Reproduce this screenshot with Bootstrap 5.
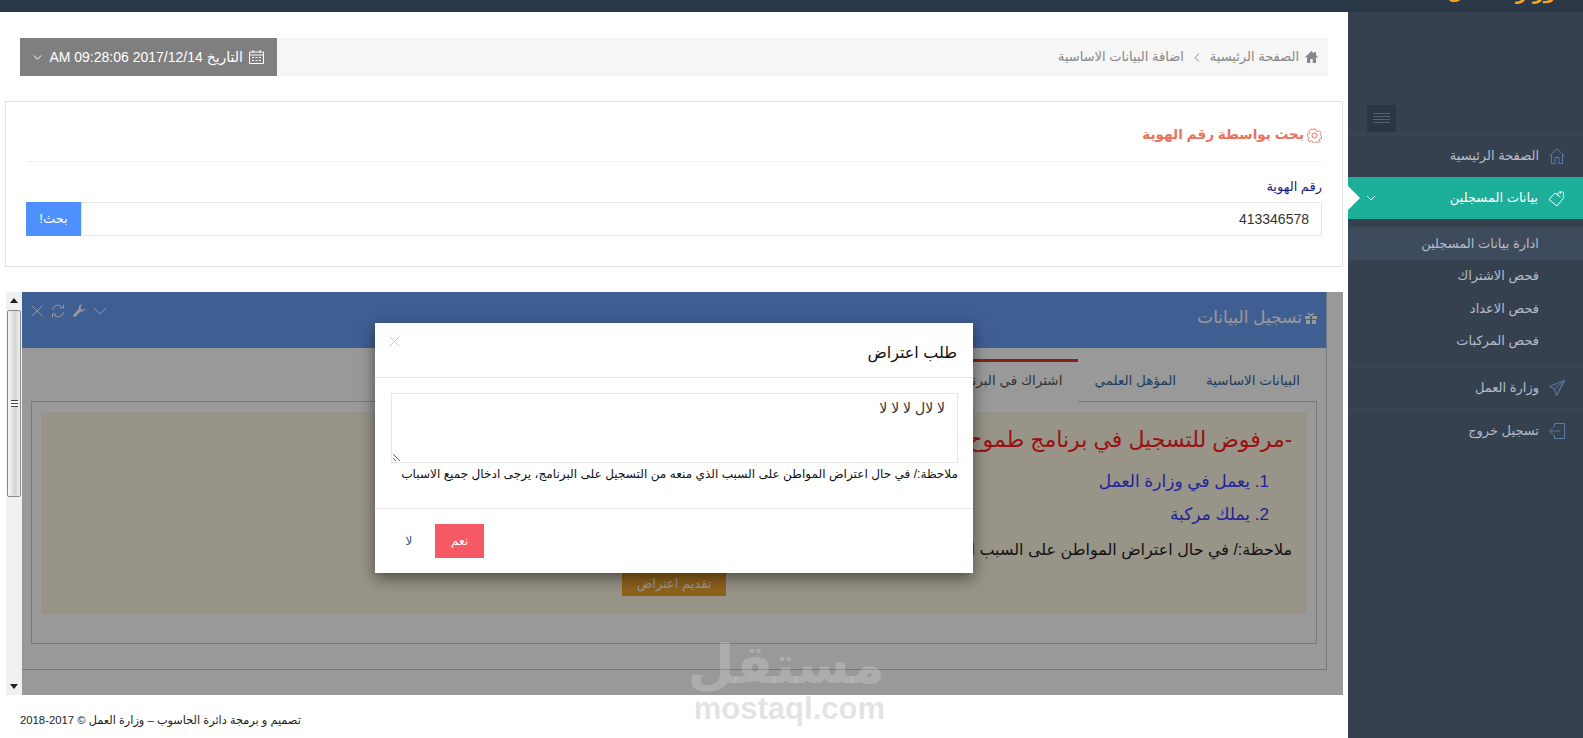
<!DOCTYPE html>
<html lang="ar" dir="rtl">
<head>
  <meta charset="UTF-8">
  <meta name="viewport" content="width=device-width, initial-scale=1.0">
  <title>اضافة البيانات الاساسية</title>
  <link href="https://cdn.jsdelivr.net/npm/bootstrap@5.3.0/dist/css/bootstrap.min.css" rel="stylesheet">
  <style>
    html, body { height: 738px; overflow: hidden; }
    body { font-family: "Liberation Sans", "DejaVu Sans", sans-serif; font-size: 13px; color: #333; background: #fff; position: relative; }
    .ico { display: block; flex: none; fill: none; stroke: currentColor; stroke-width: 1; }
    .ico-fill { fill: currentColor; stroke: none; }

    .top-strip { height: 12px; background: #2b3847; overflow: hidden; display: flex; align-items: flex-start; padding-right: 28px; }
    .top-logo { color: #f5a623; font-size: 18.5px; font-weight: 700; line-height: 20px; margin-top: -17px; white-space: nowrap; }
    .page-wrap { height: 726px; }

    .side-menu { width: 235px; flex: none; background: #364150; padding-top: 93px; color: #b4bcc8; }
    .side-toggle { width: 29px; height: 27px; margin-right: auto; margin-left: 19px; background: #2b3643; display: flex; align-items: center; justify-content: center; color: #55606e; margin-bottom: 2px; }
    .side-item { height: 43px; display: flex; align-items: center; padding: 0 18px 0 0; gap: 10px; border-top: 1px solid #3d4957; font-size: 13px; position: relative; }
    .side-item .ico { color: #5b7ba8; }
    .side-item-on { height: 42px; background: #1cb09a; color: #fff; border-top: 0; }
    .side-item-on .ico { color: #fff; }
    .side-item-on .side-arrow { margin-right: auto; margin-left: 18px; width: 10px; height: 10px; }
    .side-notch { position: absolute; left: 0; top: 9px; width: 0; height: 0; border-style: solid; border-width: 12px 0 12px 12px; border-color: transparent transparent transparent #fff; }
    .side-sub { list-style: none; margin: 8px 0 9px; padding: 0; }
    .side-sub li { height: 32.5px; display: flex; align-items: center; padding-right: 44px; font-size: 13px; }
    .side-sub li.sub-on { background: #3e4b5c; }

    .main-col { width: 1348px; flex: none; }
    .crumb-row { margin: 26px 20px 25px; height: 38px; background: #f6f6f6; display: flex; align-items: center; }
    .crumb-list { display: flex; align-items: center; gap: 6px; padding-right: 10px; color: #888; font-size: 13px; margin: 0; }
    .crumb-sep { margin: 0 4px; }
    .date-btn { margin-right: auto; width: 257px; height: 38px; background: #7f7f7f; color: #fff; display: flex; align-items: center; padding: 0 13px; gap: 6px; font-size: 14px; white-space: nowrap; }
    .date-btn .date-caret { margin-right: auto; }

    .search-card { margin: 0 5px 25px; height: 166px; border: 1px solid #e2e2e2; border-radius: 0; padding: 0 20px 0 21px; }
    .search-title { height: 60px; display: flex; align-items: center; gap: 3px; padding-top: 7px; border-bottom: 1px solid #eee; color: #e8735f; font-weight: 700; font-size: 13.6px; }
    .search-label { color: #1a1a80; font-size: 13px; margin: 16px 0 6px; line-height: 18px; display: block; }
    .search-group .form-control { height: 34px; border-radius: 0; border: 1px solid #e5e5e5; font-size: 14px; color: #333; padding: 0 12px; font-family: "Liberation Sans", sans-serif; }
    .search-group .btn { width: 55px; height: 34px; border-radius: 0; background: #4d90fe; color: #fff; font-size: 13px; border: 0; padding: 0; margin: 0; }

    .frame-box { margin: 0 5px 0 6px; height: 403px; display: flex; width: 1337px; }
    .frame-view { width: 1321px; flex: none; position: relative; overflow: hidden; }
    .frame-bar { width: 16px; flex: none; background: #f0f0f0; display: flex; flex-direction: column; align-items: center; font-size: 0; }
    .bar-up, .bar-down { width: 0; height: 0; border-style: solid; border-width: 0 4px 5px; border-color: transparent transparent #222; margin: 6px 0 7px; }
    .bar-down { border-width: 5px 4px 0; border-color: #222 transparent transparent; margin: auto 0 6px; }
    .bar-thumb { width: 14px; height: 187px; border: 1px solid #8a8a8a; border-radius: 2px; background: linear-gradient(90deg, #f8f8f8, #d4d4d4 60%, #efefef); display: flex; align-items: center; justify-content: center; }
    .bar-grip { width: 7px; height: 7px; border-top: 1px solid #444; border-bottom: 1px solid #444; background: linear-gradient(#fff 2px, #444 2px, #444 3px, #fff 3px); }

    .reg-panel { width: 1305px; height: 378px; margin-right: 16px; border: 0; border-right: 1px solid #bcd; border-bottom: 1px solid #b9c6da; background: #fff; border-radius: 0; }
    .reg-head { height: 56px; background: #699ef5; color: #fff; display: flex; padding: 16px 9px 0 8px; font-size: 17px; line-height: 20px; gap: 3px; }
    .reg-head .ico-gift { margin-top: 5px; }
    .reg-tools { margin-right: auto; display: flex; gap: 7px; flex-direction: row; height: 16px; margin-top: -4px; }
    .reg-tabs { padding-right: 10px; height: 54px; border: 0; padding-top: 11px; display: flex; margin-bottom: 0; }
    .reg-tabs .nav-link { border: 0; color: #39699a; font-size: 13.5px; padding: 0 16px 0 16px; height: 43px; line-height: 43px; border-radius: 0; margin: 0; background: transparent; }
    .reg-tabs .nav-item:first-child .nav-link { padding-left: 14px; }
    .reg-tabs .nav-link.active { color: #555; border-top: 3px solid #d4392d; border-left: 1px solid #ccc; background: #fff; line-height: 37px; height: 44px; position: relative; z-index: 1; margin-bottom: -1px; }
    .reg-body { margin: -1px 9px 0 9px; height: 243px; border: 1px solid #ccc; padding: 11px 10px 10px; }
    .reg-alert { height: 200px; margin: 0; border-radius: 0; border: 1px solid #fbeed5; background: #fdf7e3; padding: 12px 0 0; color: #222; }
    .reg-alert h4 { color: #ff2020; font-size: 22px; font-weight: 400; margin: 0 13px 11px 0; line-height: 28px; }
    .reg-reasons { color: #3a3aff; font-size: 17px; margin: 0; padding: 0 55px 0 0; }
    .reg-reasons li { height: 33px; line-height: 33px; }
    .reg-note { font-size: 16px; margin: 6px 13px 9px 0; line-height: 26px; white-space: nowrap; }
    .reg-submit { display: block; width: 104px; height: 24px; margin: 0 auto; background: #f0a330; color: #fff; font-size: 13px; border: 0; border-radius: 0; padding: 0; }

    .frame-dim { position: absolute; inset: 0; background: rgba(0, 0, 0, .4); z-index: 5; }
    .dim-modal { position: absolute; left: 353px; top: 31px; width: 598px; height: 250px; border: 0; border-radius: 0; background: #fff; box-shadow: 0 5px 15px rgba(0, 0, 0, .5); color: #111; }
    .dim-modal .modal-head { height: 55px; border-bottom: 1px solid #e5e5e5; padding: 0 16px; display: flex; position: relative; }
    .modal-head h5 { font-size: 16px; font-weight: 400; color: #111; margin: 20px 0 0; line-height: 20px; }
    .modal-x { position: absolute; left: 14px; top: 13px; color: #ccc; }
    .dim-modal .modal-main { height: 131px; padding: 15px 15px 0 16px; border-bottom: 1px solid #e5e5e5; }
    .modal-main textarea { height: 70px; border-radius: 0; border: 1px solid #e5e5e5; font-size: 14px; color: #333; padding: 5px 12px; resize: both; line-height: 18px; }
    .modal-main p { font-size: 12.1px; margin: 2px 0 0; line-height: 18px; white-space: nowrap; }
    .modal-foot { display: flex; justify-content: flex-end; padding: 15px 0 0; }
    .modal-foot .btn { height: 34px; border: 0; border-radius: 0; font-size: 12px; padding: 0; }
    .btn-yes { width: 49px; background: #f55a64; color: #fff; }
    .btn-no { width: 38px; color: #2f4f7f; background: #fff; margin: 0 7px 0 15px; }

    .foot-line { height: 43px; display: flex; align-items: center; padding: 8px 0 0 20px; font-size: 11.3px; color: #222; justify-content: flex-end; }

    .mark-over { position: absolute; left: 695px; top: 633px; width: 190px; text-align: center; pointer-events: none; z-index: 10; }
    .mark-ar { font-size: 54px; font-weight: 700; line-height: 62px; padding-left: 10px; color: rgba(255, 255, 255, .2); }
    .mark-en { font-size: 31px; font-weight: 700; line-height: 28px; font-family: "Liberation Sans", sans-serif; color: rgba(191, 191, 191, .44); }
  </style>
</head>
<body>
  <div class="top-strip"><div class="top-logo">وزارة العمل</div></div>

  <div class="page-wrap d-flex">
    <aside class="side-menu">
      <div class="side-toggle">
        <svg class="ico" width="17" height="13" viewBox="0 0 17 13"><path d="M0 1.5h17M0 4.5h17M0 7.5h17M0 10.5h17"/></svg>
      </div>
      <div class="side-item">
        <svg class="ico" width="16" height="16" viewBox="0 0 16 16"><path d="M.5 8 8 .8 15.500 8M2.500 6.500v9h3.500v-6h4v6h3.500v-9"/></svg>
        <span>الصفحة الرئيسية</span>
      </div>
      <div class="side-item side-item-on">
        <svg class="ico" width="17" height="17" viewBox="0 0 17 17" stroke-width="1.500"><path d="M1 9.500 7 3l3 2.500C9 3.500 11 1 13 2c2-1 3.500 1.500 2 3.500 1 1 1 2 0 3l-6 7.500z"/><path d="m10 5.500 2.500 1.500M13 2l-1 2"/></svg>
        <span>بيانات المسجلين</span>
        <svg class="ico side-arrow" viewBox="0 0 10 10" stroke-width="1.300"><path d="m1 3 4 4 4-4"/></svg>
        <span class="side-notch"></span>
      </div>
      <ul class="side-sub">
        <li class="sub-on">ادارة بيانات المسجلين</li>
        <li>فحص الاشتراك</li>
        <li>فحص الاعداد</li>
        <li>فحص المركبات</li>
      </ul>
      <div class="side-item">
        <svg class="ico" width="16" height="16" viewBox="0 0 16 16"><path d="M15.500.5.500 6.500l5 2.500 2 6.500zM15.500.5 5.500 9M15.500.5 7.500 15.500"/></svg>
        <span>وزارة العمل</span>
      </div>
      <div class="side-item">
        <svg class="ico" width="16" height="16" viewBox="0 0 16 16"><path d="M5.500 4V.5h10v15h-10V12M11 8H.5M4 4.500.5 8 4 11.500"/></svg>
        <span>تسجيل خروج</span>
      </div>
    </aside>

    <main class="main-col">
      <div class="crumb-row">
        <div class="crumb-list">
          <svg class="ico ico-fill" width="13" height="12" viewBox="0 0 13 12"><path d="M6.500 0 0 6l.8.800L2 5.700V12h3.300V8h2.400v4H11V5.700l1.200 1.100.8-.8-2-1.900V1H9v1.400z"/></svg>
          <span>الصفحة الرئيسية</span>
          <svg class="ico crumb-sep" width="6" height="9" viewBox="0 0 6 9"><path d="M5 .5 1 4.500l4 4"/></svg>
          <span>اضافة البيانات الاساسية</span>
        </div>
        <div class="date-btn">
          <svg class="ico" width="15" height="14" viewBox="0 0 15 14"><path d="M.5 2h14v11.500H.5zM.5 5h14M4 0v3M11 0v3M3 7.500h2M6.500 7.500h2M10 7.500h2M3 10.500h2M6.500 10.500h2M10 10.500h2"/></svg>
          <span>التاريخ 2017/12/14 09:28:06 AM</span>
          <svg class="ico date-caret" width="9" height="9" viewBox="0 0 9 9" stroke-width="1.200"><path d="m.8 2.500 3.700 3.700 3.700-3.700"/></svg>
        </div>
      </div>

      <section class="card search-card">
        <div class="search-title">
          <svg class="ico" width="15" height="15" viewBox="0 0 15 15"><path d="M6 .5h3l.4 2 1.500.7 1.800-1 2 2-1 1.800.7 1.500 1 .5v2.500l-2 .4-.7 1.500 1 1.800-2 1-1.800-.7-1.500.7-.4 1H6l-.4-2-1.500-.7-1.800 1-2-2 1-1.800-.7-1.500-1-.4V6l2-.4.700-1.500-1-1.800 2-2 1.800 1 1.500-.7z" transform="translate(.7 .7) scale(.9)"/><circle cx="7.500" cy="7.500" r="2.500"/></svg>
          <span>بحث بواسطة رقم الهوية</span>
        </div>
        <label class="search-label">رقم الهوية</label>
        <div class="input-group search-group">
          <input type="text" class="form-control" value="413346578">
          <button class="btn" type="button">بحث!</button>
        </div>
      </section>

      <div class="frame-box">
        <div class="frame-view">
          <div class="card reg-panel">
            <div class="reg-head">
              <svg class="ico ico-fill ico-gift" width="12" height="11" viewBox="0 0 12 11"><path d="M0 3h5V2C4 2 2.500 2 2.500.8 2.500-.3 5 0 6 1.500 7 0 9.500-.3 9.500.8 9.500 2 8 2 7 2v1h5v3H7V3H5v3H0zM1 7h4v4H1zM7 7h4v4H7z"/></svg>
              <span>تسجيل البيانات</span>
              <div class="reg-tools">
                <svg class="ico" width="14" height="14" viewBox="0 0 14 14" stroke-width="1.500"><path d="m1 4 6 6 6-6"/></svg>
                <svg class="ico ico-fill" width="14" height="14" viewBox="0 0 14 14"><path d="M10 .5a3.500 3.500 0 0 0-3.300 4.700L1.500 10.500a1.400 1.400 0 0 0 2 2l5.300-5.300A3.500 3.500 0 0 0 13.500 4L11.300 6 9 5.200 8.500 3z"/></svg>
                <svg class="ico" width="14" height="14" viewBox="0 0 14 14" stroke-width="2"><path d="M1.500 6A5.500 5.500 0 0 1 11.500 3.500M12.500 8A5.500 5.500 0 0 1 2.500 10.500M9 4h3.500V.5M5 10H1.500v3.500"/></svg>
                <svg class="ico" width="14" height="14" viewBox="0 0 14 14" stroke-width="1.500"><path d="m1.500 1.500 11 11M12.500 1.500l-11 11"/></svg>
              </div>
            </div>
            <ul class="nav nav-tabs reg-tabs">
              <li class="nav-item"><a class="nav-link" href="#">البيانات الاساسية</a></li>
              <li class="nav-item"><a class="nav-link" href="#">المؤهل العلمي</a></li>
              <li class="nav-item"><a class="nav-link active" href="#">اشتراك في البرنامج</a></li>
            </ul>
            <div class="reg-body">
              <div class="alert reg-alert">
                <h4>-مرفوض للتسجيل في برنامج طموح</h4>
                <ol class="reg-reasons">
                  <li>يعمل في وزارة العمل</li>
                  <li>يملك مركبة</li>
                </ol>
                <p class="reg-note">ملاحظة:/ في حال اعتراض المواطن على السبب الذي منعه من التسجيل على البرنامج، يرجى ادخال جميع الاسباب</p>
                <button class="btn reg-submit" type="button">تقديم اعتراض</button>
              </div>
            </div>
          </div>

          <div class="frame-dim">
            <div class="modal-content dim-modal">
              <div class="modal-head">
                <h5>طلب اعتراض</h5>
                <svg class="ico modal-x" width="11" height="11" viewBox="0 0 11 11" stroke-width="1.300"><path d="m.5.500 10 10M10.500.500l-10 10"/></svg>
              </div>
              <div class="modal-main">
                <textarea class="form-control">لا لال لا لا لا</textarea>
                <p>ملاحظة:/ في حال اعتراض المواطن على السبب الذي منعه من التسجيل على البرنامج، يرجى ادخال جميع الاسباب</p>
              </div>
              <div class="modal-foot">
                <button class="btn btn-yes" type="button">نعم</button>
                <button class="btn btn-no" type="button">لا</button>
              </div>
            </div>
          </div>
        </div>
        <div class="frame-bar">
          <span class="bar-up"></span>
          <div class="bar-thumb"><span class="bar-grip"></span></div>
          <span class="bar-down"></span>
        </div>
      </div>

      <div class="foot-line">تصميم و برمجة دائرة الحاسوب – وزارة العمل © 2017-2018</div>
    </main>
  </div>

  <div class="mark-over">
    <div class="mark-ar">مستقل</div>
    <div class="mark-en">mostaql.com</div>
  </div>
  <script src="https://cdn.jsdelivr.net/npm/bootstrap@5.3.0/dist/js/bootstrap.bundle.min.js"></script>
</body>
</html>
